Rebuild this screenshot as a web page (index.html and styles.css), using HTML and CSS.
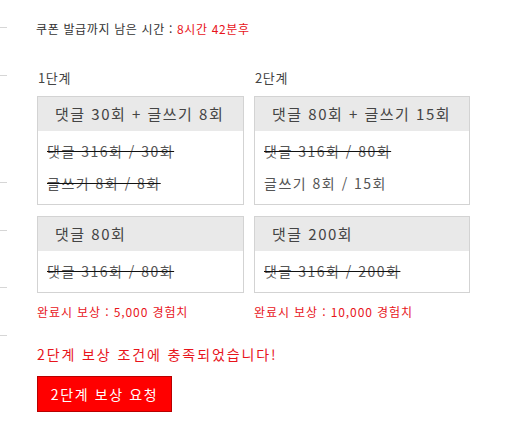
FILE: index.html
```html
<!DOCTYPE html>
<html lang="ko">
<head>
<meta charset="utf-8">
<link rel="stylesheet" href="styles.css">
</head>
<body>
<div class="page">
  <div class="rail">
    <div class="tick t1"></div>
    <div class="tick t2"></div>
    <div class="tick t3"></div>
    <div class="tick t2"></div>
    <div class="tick t4"></div>
    <div class="tick t2"></div>
  </div>
  <div class="main">
    <p class="timer">쿠폰 발급까지 남은 시간 : <span class="red">8시간 42분후</span></p>
    <div class="stages">
      <div class="stage">
        <div class="stage-title">1단계</div>
        <div class="box">
          <div class="box-head">댓글 30회 + 글쓰기 8회</div>
          <div class="box-body">
            <div class="line done">댓글 316회 / 30회</div>
            <div class="line done">글쓰기 8회 / 8회</div>
          </div>
        </div>
        <div class="box">
          <div class="box-head">댓글 80회</div>
          <div class="box-body">
            <div class="line done">댓글 316회 / 80회</div>
          </div>
        </div>
        <div class="reward">완료시 보상 : 5,000 경험치</div>
      </div>
      <div class="stage">
        <div class="stage-title">2단계</div>
        <div class="box">
          <div class="box-head">댓글 80회 + 글쓰기 15회</div>
          <div class="box-body">
            <div class="line done">댓글 316회 / 80회</div>
            <div class="line">글쓰기 8회 / 15회</div>
          </div>
        </div>
        <div class="box">
          <div class="box-head">댓글 200회</div>
          <div class="box-body">
            <div class="line done">댓글 316회 / 200회</div>
          </div>
        </div>
        <div class="reward">완료시 보상 : 10,000 경험치</div>
      </div>
    </div>
    <p class="notice">2단계 보상 조건에 충족되었습니다!</p>
    <button class="btn" type="button">2단계 보상 요청</button>
  </div>
</div>
</body>
</html>
```
FILE: styles.css
```css
* { box-sizing: border-box; }
html, body { margin: 0; padding: 0; background: #fff; }
body {
  font-family: "Noto Sans CJK KR", "Noto Sans", sans-serif;
  color: #333;
}
.page { display: flex; width: 532px; height: 429px; }
.rail { width: 7px; flex: none; display: flex; flex-direction: column; }
.tick { border-bottom: 1px solid #d6d6d6; }
.t1 { height: 28px; }
.t2 { height: 48px; }
.t3 { height: 107px; }
.t4 { height: 57px; }
.main { padding-left: 29px; flex: 1; }
.timer {
  margin: 21px 0 0;
  font-size: 12px;
  line-height: 16px;
  letter-spacing: 0.65px;
  color: #333;
}
.red { color: #e8141b; }
.stages { display: flex; gap: 9px; margin-top: 33px; }
.stage { width: 208px; }
.stage + .stage { width: 217px; }
.stage-title { font-size: 13px; line-height: 16px; color: #444; padding-left: 2px; margin-bottom: 10px; letter-spacing: 0.6px; }
.box { border: 1px solid #d3d3d3; margin-left: 1px; margin-bottom: 11px; }
.box-head {
  background: #e9e9e9;
  height: 34px;
  line-height: 34px;
  padding-left: 17px;
  font-size: 15px;
  letter-spacing: 1.5px;
  color: #444;
}
.box-body { padding: 4px 9px 5px; }
.line { font-size: 14px; line-height: 32px; color: #555; letter-spacing: 1.5px; }
.done { text-decoration: line-through; text-decoration-color: #111; text-decoration-thickness: 1px; }
.reward { font-size: 12px; line-height: 16px; color: #e8141b; margin-top: 5px; padding-left: 1px; letter-spacing: 0.9px; }
.notice { margin: 26px 0 0 1px; font-size: 14px; line-height: 16px; color: #e8141b; letter-spacing: 1.9px; }
.btn {
  margin: 14px 0 0 1px;
  width: 135px;
  height: 36px;
  background: #ff0000;
  border: 1px solid #b80000;
  color: #fff;
  font-family: inherit;
  font-size: 14px;
  letter-spacing: 1.6px;
  padding: 0;
}
```
